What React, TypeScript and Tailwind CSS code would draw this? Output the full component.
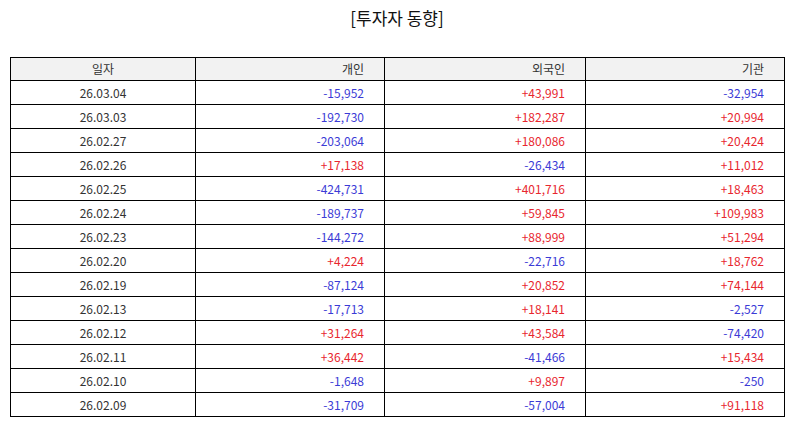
const rows: [string, string, string, string][] = [
  ["26.03.04", "-15,952", "+43,991", "-32,954"],
  ["26.03.03", "-192,730", "+182,287", "+20,994"],
  ["26.02.27", "-203,064", "+180,086", "+20,424"],
  ["26.02.26", "+17,138", "-26,434", "+11,012"],
  ["26.02.25", "-424,731", "+401,716", "+18,463"],
  ["26.02.24", "-189,737", "+59,845", "+109,983"],
  ["26.02.23", "-144,272", "+88,999", "+51,294"],
  ["26.02.20", "+4,224", "-22,716", "+18,762"],
  ["26.02.19", "-87,124", "+20,852", "+74,144"],
  ["26.02.13", "-17,713", "+18,141", "-2,527"],
  ["26.02.12", "+31,264", "+43,584", "-74,420"],
  ["26.02.11", "+36,442", "-41,466", "+15,434"],
  ["26.02.10", "-1,648", "+9,897", "-250"],
  ["26.02.09", "-31,709", "-57,004", "+91,118"],
];

function Num({ value }: { value: string }) {
  const color = value.startsWith("-") ? "text-[#3b3bd6]" : "text-[#e8262e]";
  return (
    <td className={`border border-black h-6 pr-5 text-right ${color}`}>{value}</td>
  );
}

export default function App() {
  return (
    <div
      className="w-[794px] h-[425px] bg-white px-[10px] pt-[6px]"
      style={{ fontFamily: '"Noto Sans CJK KR", "Noto Sans", sans-serif' }}
    >
      <h1 className="text-center text-[17px] leading-6 text-[#111] mb-[27px]">[투자자 동향]</h1>
      <table className="w-[774px] border-collapse text-[12px] text-[#333] table-fixed">
        <colgroup>
          <col className="w-[185px]" />
          <col className="w-[189px]" />
          <col className="w-[201px]" />
          <col className="w-[199px]" />
        </colgroup>
        <thead>
          <tr className="bg-[#f2f2f2]">
            <th className="border border-black h-[23px] font-normal text-center">일자</th>
            <th className="border border-black h-[23px] font-normal text-right pr-5">개인</th>
            <th className="border border-black h-[23px] font-normal text-right pr-5">외국인</th>
            <th className="border border-black h-[23px] font-normal text-right pr-5">기관</th>
          </tr>
        </thead>
        <tbody>
          {rows.map(([date, a, b, c]) => (
            <tr key={date}>
              <td className="border border-black h-6 text-center">{date}</td>
              <Num value={a} />
              <Num value={b} />
              <Num value={c} />
            </tr>
          ))}
        </tbody>
      </table>
    </div>
  );
}
